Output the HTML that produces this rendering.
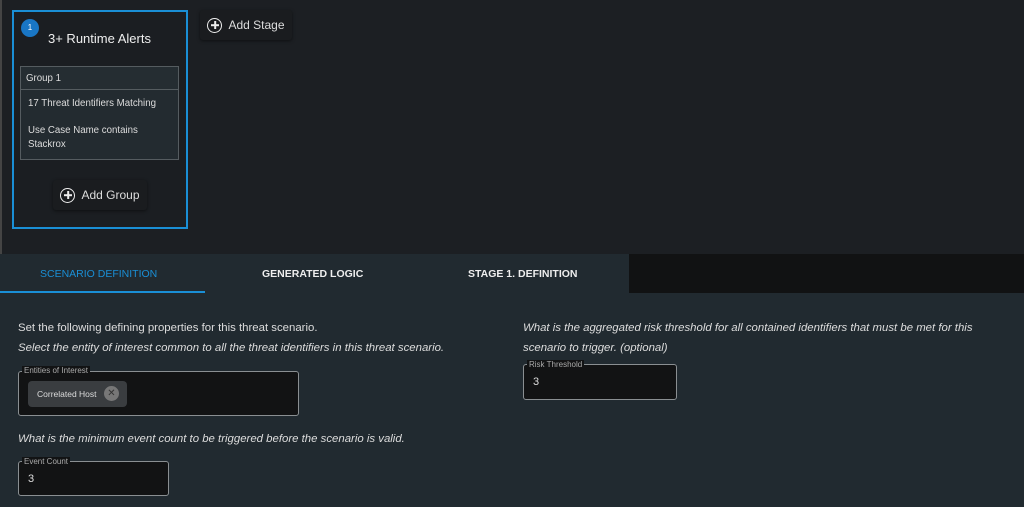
<!DOCTYPE html>
<html><head><style>
*{box-sizing:border-box;margin:0;padding:0}
body{width:1024px;height:507px;overflow:hidden;background:#1c1f23;font-family:"Liberation Sans",sans-serif;color:#ddd;position:relative}
.a{position:absolute}
.card{left:12px;top:10px;width:176px;height:219px;border:2px solid #1a8fd6;background:#1b1e22}
.badge{left:21px;top:19px;width:18px;height:18px;border-radius:50%;background:#1976c5;color:#fff;font-size:8px;text-align:center;line-height:18px}
.btn{background:#1a1c1f;border-radius:3px;box-shadow:0 1px 3px rgba(0,0,0,.5);color:#ddd;font-size:12px;display:flex;align-items:center;gap:6px;justify-content:center}
.ci{width:15px;height:15px;border:1.6px solid #eee;border-radius:50%;position:relative}
.ci:before,.ci:after{content:"";position:absolute;background:#eee;left:50%;top:50%;transform:translate(-50%,-50%)}
.ci:before{width:8px;height:1.6px}.ci:after{width:1.6px;height:8px}
.grp{left:20px;top:66px;width:159px;height:94px;border:1px solid #555c60;background:#232b30;font-size:9.7px;color:#ddd}
.bottom{left:0;top:254px;width:1024px;height:253px;background:#212a30}
.tab{top:268px;font-size:10.5px;font-weight:bold;color:#eee}
.field{border:1.5px solid #8a8f92;border-radius:3px;background:#121314}
.lbl{font-size:8px;color:#aaa;background:#121314;padding:0 2px}
.t{font-size:11.4px;color:#ddd}
.i{font-style:italic}
</style></head><body>
<div class="a" style="left:0;top:0;width:2px;height:254px;background:#444"></div>
<div class="a card"></div>
<div class="a badge">1</div>
<div class="a" style="left:48px;top:31px;font-size:13px;color:#eee">3+ Runtime Alerts</div>
<div class="a grp">
 <div style="height:23px;border-bottom:1px solid #555c60;padding:6px 5px;background:#252d32">Group 1</div>
 <div style="padding:7px 7px;line-height:14px">17 Threat Identifiers Matching<br><div style="height:13px"></div>Use Case Name contains<br>Stackrox</div>
</div>
<div class="a btn" style="left:53px;top:180px;width:94px;height:30px"><span class="ci"></span>Add Group</div>
<div class="a btn" style="left:200px;top:10px;width:92px;height:30px"><span class="ci"></span>Add Stage</div>
<div class="a bottom"></div>
<div class="a" style="left:629px;top:254px;width:395px;height:39px;background:#111213"></div>
<div class="a" style="left:0;top:291px;width:205px;height:2px;background:#1a8fd6"></div>
<div class="a tab" style="left:40px;color:#1a8fd6;font-weight:normal">SCENARIO DEFINITION</div>
<div class="a tab" style="left:262px">GENERATED LOGIC</div>
<div class="a tab" style="left:468px">STAGE 1. DEFINITION</div>
<div class="a t" style="left:18px;top:322px">Set the following defining properties for this threat scenario.</div>
<div class="a t i" style="left:18px;top:342px">Select the entity of interest common to all the threat identifiers in this threat scenario.</div>
<div class="a field" style="left:18px;top:371px;width:281px;height:45px"></div>
<div class="a lbl" style="left:22px;top:366px">Entities of Interest</div>
<div class="a" style="left:28px;top:381px;width:99px;height:26px;background:#3a3d40;border-radius:4px;font-size:8.5px;color:#ddd;padding:8px 9px">Correlated Host</div>
<div class="a" style="left:104px;top:386px;width:15px;height:15px;border-radius:50%;background:#777;color:#333;font-size:10px;text-align:center;line-height:15px">✕</div>
<div class="a t i" style="left:18px;top:433px">What is the minimum event count to be triggered before the scenario is valid.</div>
<div class="a field" style="left:18px;top:461px;width:151px;height:35px"></div>
<div class="a lbl" style="left:22px;top:457px">Event Count</div>
<div class="a t" style="left:28px;top:473px;font-size:11px">3</div>
<div class="a t i" style="left:523px;top:322px">What is the aggregated risk threshold for all contained identifiers that must be met for this</div>
<div class="a t i" style="left:523px;top:342px">scenario to trigger. (optional)</div>
<div class="a field" style="left:523px;top:364px;width:154px;height:36px"></div>
<div class="a lbl" style="left:527px;top:360px">Risk Threshold</div>
<div class="a t" style="left:533px;top:376px;font-size:11px">3</div>
</body></html>
